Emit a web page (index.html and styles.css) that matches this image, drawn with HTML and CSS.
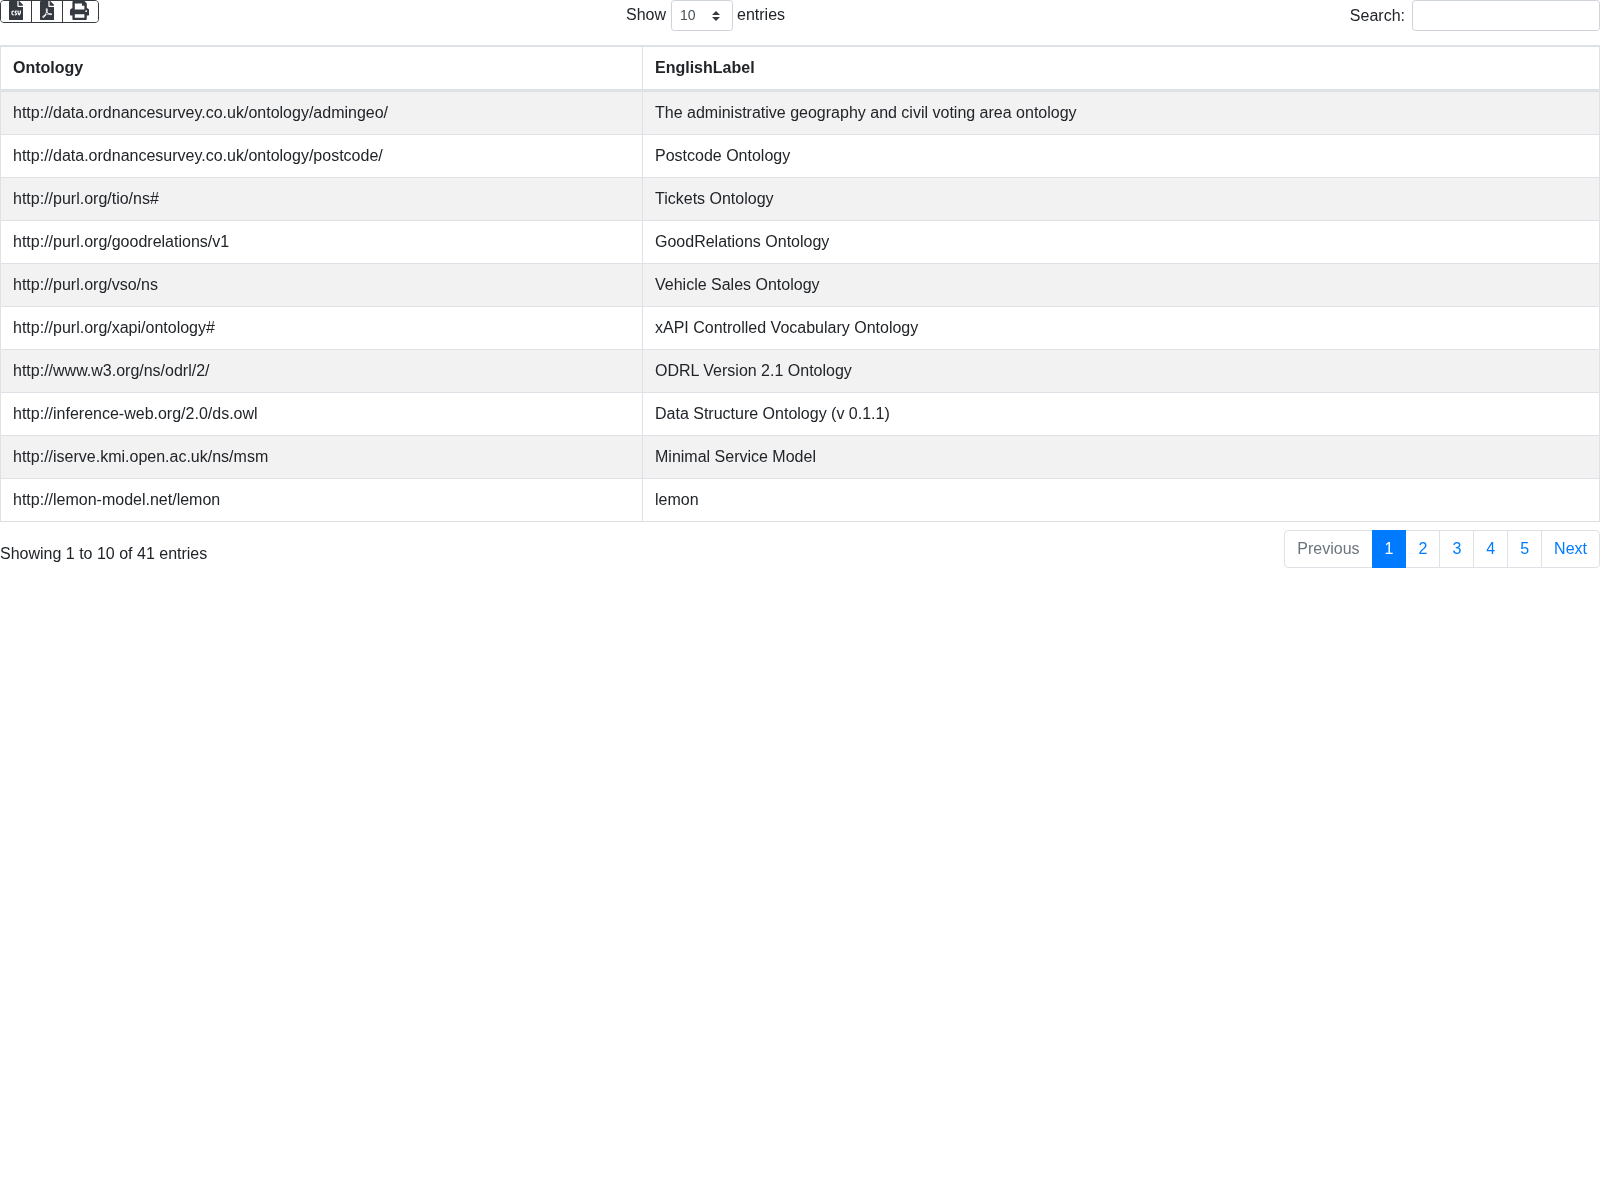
FILE: index.html
```html
<!DOCTYPE html>
<html lang="en">
<head>
<meta charset="utf-8">
<title>Ontologies</title>
<link rel="stylesheet" href="styles.css">
</head>
<body>
<div class="wrapper">
  <div class="controls">
    <div class="btn-group">
      <button class="btn" type="button" aria-label="CSV"><svg class="icon icon-file" viewBox="0 0 384 512"><path d="M224 136V0H24C10.7 0 0 10.7 0 24v464c0 13.3 10.7 24 24 24h336c13.3 0 24-10.7 24-24V160H248c-13.2 0-24-10.8-24-24zm-96 144c0 4.42-3.58 8-8 8h-8c-8.84 0-16 7.16-16 16v32c0 8.84 7.16 16 16 16h8c4.42 0 8 3.58 8 8v16c0 4.42-3.58 8-8 8h-8c-26.51 0-48-21.49-48-48v-32c0-26.51 21.49-48 48-48h8c4.42 0 8 3.58 8 8v16zm44.27 104H160c-4.42 0-8-3.58-8-8v-16c0-4.42 3.58-8 8-8h12.27c5.95 0 10.41-3.5 10.41-6.62 0-1.3-.75-2.66-2.12-3.84l-21.89-18.77c-8.47-7.22-13.33-17.48-13.33-28.14 0-21.3 19.02-38.62 42.41-38.62H200c4.42 0 8 3.58 8 8v16c0 4.42-3.58 8-8 8h-12.27c-5.95 0-10.41 3.5-10.41 6.62 0 1.3.75 2.66 2.12 3.84l21.89 18.77c8.47 7.22 13.33 17.48 13.33 28.14.01 21.29-19 38.62-42.39 38.62zM256 264v20.8c0 20.27 5.7 40.17 16 56.88 10.3-16.7 16-36.61 16-56.88V264c0-4.42 3.58-8 8-8h16c4.42 0 8 3.58 8 8v20.8c0 35.48-12.88 68.89-36.28 94.09-3.02 3.25-7.27 5.11-11.72 5.11s-8.7-1.86-11.72-5.11c-23.4-25.2-36.28-58.61-36.28-94.09V264c0-4.42 3.58-8 8-8h16c4.42 0 8 3.58 8 8zm121-159L279.1 7c-4.5-4.5-10.6-7-17-7H256v128h128v-6.1c0-6.3-2.5-12.4-7-16.9z"/></svg></button>
      <button class="btn btn-pdf" type="button" aria-label="PDF"><svg class="icon icon-file" viewBox="0 0 384 512"><path d="M181.9 256.1c-5-16-4.9-46.9-2-46.9 8.4 0 7.6 36.9 2 46.9zm-1.7 47.2c-7.7 20.2-17.3 43.3-28.4 62.7 18.3-7 39-17.2 62.9-21.9-12.7-9.6-24.9-23.4-34.5-40.8zM86.1 428.1c0 .8 13.2-5.4 34.9-40.2-6.7 6.3-29.1 24.5-34.9 40.2zM248 160h136v328c0 13.3-10.7 24-24 24H24c-13.3 0-24-10.7-24-24V24C0 10.7 10.7 0 24 0h200v136c0 13.2 10.8 24 24 24zm-8 171.8c-20-12.2-33.3-29-42.7-53.8 4.5-18.5 11.6-46.6 6.2-64.2-4.7-29.4-42.4-26.5-47.8-6.8-5 18.3-.4 44.1 8.1 77-11.6 27.6-28.7 64.6-40.8 85.8-.1 0-.1.1-.2.1-27.1 13.9-73.6 44.5-54.5 68 5.6 6.9 16 10 21.5 10 17.9 0 35.7-18 61.1-61.8 25.8-8.5 54.1-19.1 79-23.2 21.7 11.8 47.1 19.5 64 19.5 29.2 0 31.2-32 19.7-43.4-13.9-13.6-54.3-9.7-73.6-7.2zM377 105L279 7c-4.5-4.5-10.6-7-17-7h-6v128h128v-6.1c0-6.3-2.5-12.4-7-16.9zm-74.1 255.3c4.1-2.7-2.5-11.9-42.8-9 37.1 15.8 42.8 9 42.8 9z"/></svg></button>
      <button class="btn btn-print" type="button" aria-label="Print"><svg class="icon icon-print" viewBox="0 0 512 512"><path d="M448 192V77.25c0-8.49-3.37-16.62-9.37-22.63L393.37 9.37c-6-6-14.14-9.37-22.63-9.37H96C78.33 0 64 14.33 64 32v160c-35.35 0-64 28.65-64 64v112c0 8.84 7.16 16 16 16h48v96c0 17.67 14.33 32 32 32h320c17.67 0 32-14.33 32-32v-96h48c8.84 0 16-7.16 16-16V256c0-35.35-28.65-64-64-64zm-64 256H128v-96h256v96zm0-224H128V64h192v48c0 8.84 7.16 16 16 16h48v96zm48 72c-13.25 0-24-10.75-24-24 0-13.26 10.75-24 24-24s24 10.74 24 24c0 13.25-10.75 24-24 24z"/></svg></button>
    </div>
    <label class="length">Show <select class="select"><option>10</option><option>25</option><option>50</option><option>100</option></select> entries</label>
    <label class="search">Search: <input class="input" type="search"></label>
  </div>
  <table class="table">
    <thead>
      <tr><th class="col-ontology">Ontology</th><th>EnglishLabel</th></tr>
    </thead>
    <tbody>
      <tr><td>http://data.ordnancesurvey.co.uk/ontology/admingeo/</td><td>The administrative geography and civil voting area ontology</td></tr>
      <tr><td>http://data.ordnancesurvey.co.uk/ontology/postcode/</td><td>Postcode Ontology</td></tr>
      <tr><td>http://purl.org/tio/ns#</td><td>Tickets Ontology</td></tr>
      <tr><td>http://purl.org/goodrelations/v1</td><td>GoodRelations Ontology</td></tr>
      <tr><td>http://purl.org/vso/ns</td><td>Vehicle Sales Ontology</td></tr>
      <tr><td>http://purl.org/xapi/ontology#</td><td>xAPI Controlled Vocabulary Ontology</td></tr>
      <tr><td>http://www.w3.org/ns/odrl/2/</td><td>ODRL Version 2.1 Ontology</td></tr>
      <tr><td>http://inference-web.org/2.0/ds.owl</td><td>Data Structure Ontology (v 0.1.1)</td></tr>
      <tr><td>http://iserve.kmi.open.ac.uk/ns/msm</td><td>Minimal Service Model</td></tr>
      <tr><td>http://lemon-model.net/lemon</td><td>lemon</td></tr>
    </tbody>
  </table>
  <div class="footer">
    <div class="info">Showing 1 to 10 of 41 entries</div>
    <ul class="pagination">
      <li class="page disabled"><a href="#">Previous</a></li>
      <li class="page active"><a href="#">1</a></li>
      <li class="page"><a href="#">2</a></li>
      <li class="page"><a href="#">3</a></li>
      <li class="page"><a href="#">4</a></li>
      <li class="page"><a href="#">5</a></li>
      <li class="page"><a href="#">Next</a></li>
    </ul>
  </div>
</div>
</body>
</html>
```

FILE: styles.css
```css
* { box-sizing: border-box; }

body {
  margin: 0;
  background: #fff;
  color: #212529;
  font-family: "Liberation Sans", Arial, sans-serif;
  font-size: 16px;
  line-height: 24px;
}

.wrapper { will-change: transform; }

.controls {
  display: grid;
  grid-template-columns: 626px 1fr auto;
  height: 45px;
  align-items: start;
}

.btn-group {
  display: inline-flex;
  justify-self: start;
  height: 23px;
  border: 1px solid #343a40;
  border-radius: 4px;
  overflow: hidden;
}

.btn {
  display: flex;
  align-items: flex-start;
  padding: 0 8px;
  margin: 0;
  border: 0;
  border-right: 1px solid #343a40;
  background: #fff;
  color: #343a40;
}

.btn-pdf { padding: 0 7.9px 0 7.6px; }
.btn-print { border-right: 0; padding: 0 8.5px 0 7px; }

.icon { display: block; fill: currentColor; height: 19.2px; }
.icon-file { width: 14.4px; }
.icon-print { width: 19.2px; }

.length {
  display: flex;
  align-items: flex-start;
  gap: 4px;
  height: 31px;
  line-height: 29px;
}

.select {
  appearance: none;
  width: 62px;
  height: 31px;
  margin-left: 1px;
  padding: 3px 24px 5px 8px;
  border: 1px solid #ced4da;
  border-radius: 3.2px;
  color: #495057;
  font-family: inherit;
  font-size: 14px;
  background: #fff url("data:image/svg+xml,%3csvg xmlns='http://www.w3.org/2000/svg' width='4' height='5' viewBox='0 0 4 5'%3e%3cpath fill='%23343a40' d='M2 0L0 2h4zm0 5L0 3h4z'/%3e%3c/svg%3e") no-repeat right 12px center / 8px 10px;
}

.search {
  display: flex;
  align-items: center;
  gap: 7px;
  height: 31px;
}

.input {
  width: 188px;
  height: 31px;
  padding: 4px 8px;
  border: 1px solid #ced4da;
  border-radius: 3.2px;
  background: #fff;
  font-size: 14px;
  appearance: none;
}

.table {
  width: 100%;
  table-layout: fixed;
  border-collapse: separate;
  border-spacing: 0;
  border: 1px solid #dee2e6;
  border-right: 0;
}

th, td {
  padding: 9px 12px;
  border-top: 1px solid #dee2e6;
  border-right: 1px solid #dee2e6;
  text-align: left;
}

th { font-weight: 700; border-bottom: 2px solid #dee2e6; }
.col-ontology { width: 642px; }
tbody tr:nth-child(odd) { background: #f2f2f2; }

.footer {
  display: flex;
  justify-content: space-between;
  align-items: flex-start;
  margin-top: 8px;
}

.info { padding-top: 12px; }

.pagination {
  display: flex;
  margin: 0;
  padding: 0;
  list-style: none;
}

.page a {
  display: block;
  margin-left: -1px;
  padding: 8px 12px;
  border: 1px solid #dee2e6;
  background: #fff;
  color: #007bff;
  line-height: 20px;
  text-decoration: none;
}

.page:first-child a { margin-left: 0; border-radius: 4px 0 0 4px; }
.page:last-child a { border-radius: 0 4px 4px 0; }
.page.disabled a { color: #6c757d; }
.page.active a { position: relative; background: #007bff; border-color: #007bff; color: #fff; }
```
